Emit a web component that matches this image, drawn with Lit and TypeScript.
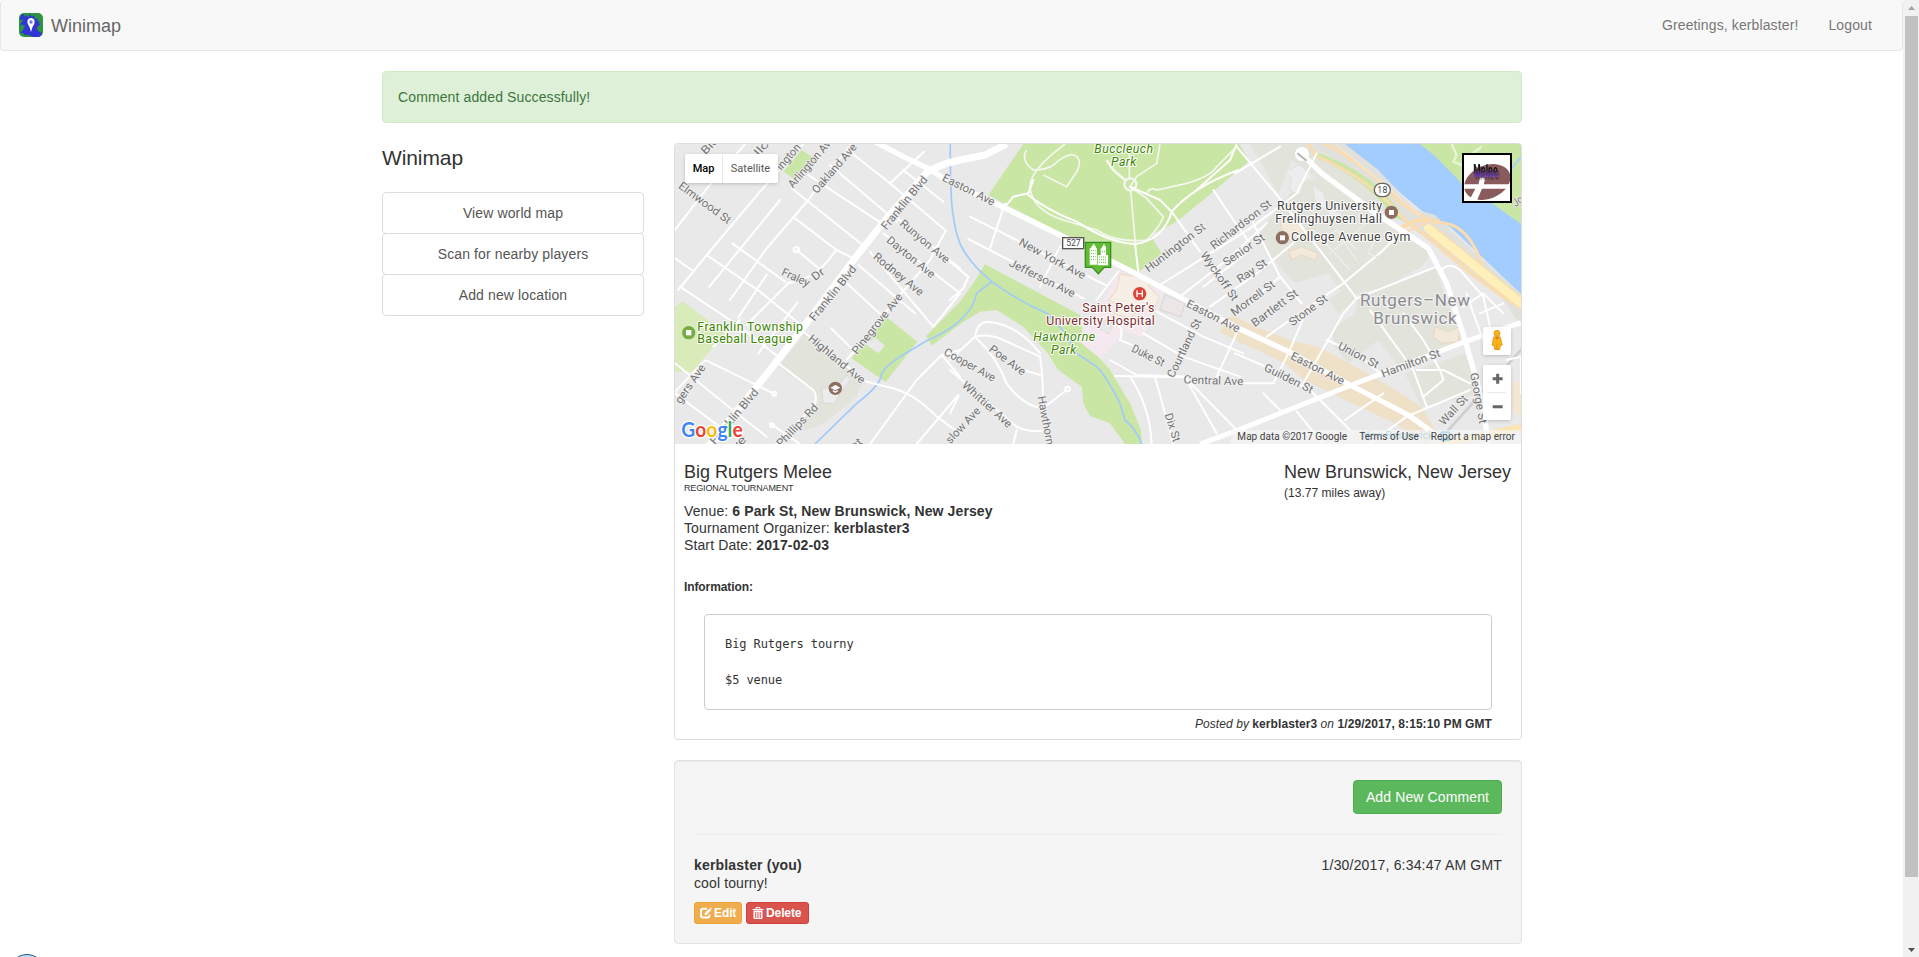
import { LitElement, html, css, svg } from "lit";
import { customElement } from "lit/decorators.js";

type Label = [string, number, number, number, number, number?];

/* Map drawing units are thirds of a pixel. */
const streets: Label[] = [
  ["Elmwood St", 30, 133, 180, 243],
  ["Arlington Ave", 360, 138, 486, -8],
  ["Oakland Ave", 432, 155, 553, 15],
  ["Blo", 98, 37, 140, -6],
  ["llcr", 258, 42, 300, -5],
  ["ington", 325, 85, 385, 15],
  ["Franklin Blvd", 640, 264, 765, 112],
  ["Runyon Ave", 695, 245, 835, 362],
  ["Dayton Ave", 655, 295, 792, 407],
  ["Rodney Ave", 615, 345, 757, 460],
  ["Fraley", 337, 393, 418, 430],
  ["Dr", 428, 414, 459, 390],
  ["Franklin Blvd", 424, 538, 552, 380],
  ["Pinegrove Ave", 552, 638, 690, 463],
  ["Highland Ave", 420, 590, 582, 724],
  ["gers Ave", 22, 787, 98, 676],
  ["Franklin Blvd", 126, 908, 258, 750],
  ["Phillips Rd", 325, 915, 438, 796],
  ["ve", 190, 925, 222, 892],
  ["ct", 545, 922, 572, 900],
  ["slow Ave", 832, 905, 925, 806],
  ["Cooper Ave", 825, 632, 975, 715],
  ["Easton Ave", 820, 110, 973, 187],
  ["New York Ave", 1050, 303, 1245, 408],
  ["Jefferson Ave", 1020, 366, 1214, 462],
  ["Poe Ave", 962, 622, 1064, 698],
  ["Whittier Ave", 882, 730, 1022, 856],
  ["Hawthorn", 1114, 768, 1142, 914],
  ["Duke St", 1388, 622, 1482, 670],
  ["Dix St", 1495, 820, 1522, 904],
  ["Courtland St", 1500, 710, 1584, 538],
  ["Central Ave", 1541, 718, 1720, 724],
  ["Easton Ave", 1552, 488, 1708, 567],
  ["Wyckoff St", 1600, 338, 1698, 478],
  ["Huntington St", 1428, 388, 1602, 256],
  ["Richardson St", 1625, 320, 1800, 186],
  ["Senior St", 1662, 370, 1780, 288],
  ["Ray St", 1703, 420, 1787, 364],
  ["Morrell St", 1686, 520, 1811, 428],
  ["Bartlett St", 1747, 552, 1880, 455],
  ["Stone St", 1860, 550, 1968, 470],
  ["Union St", 2007, 615, 2125, 675],
  ["Hamilton St", 2135, 702, 2309, 637],
  ["Easton Ave", 1865, 645, 2022, 725],
  ["Guilden St", 1785, 680, 1928, 750],
  ["Wall St", 2313, 850, 2386, 770],
  ["George St", 2412, 698, 2440, 850],
  ["Jo", 2530, 192, 2556, 174],
];

const streetLabel = ([t, x1, y1, x2, y2]: Label) => {
  const dx = x2 - x1, dy = y2 - y1;
  const a = (Math.atan2(dy, dx) * 180) / Math.PI;
  return svg`<text class="st" textLength=${Math.hypot(dx, dy).toFixed(1)} lengthAdjust="spacingAndGlyphs"
    transform="translate(${x1} ${y1}) rotate(${a.toFixed(1)}) translate(0 12)">${t}</text>`;
};

@customElement("venue-map")
class VenueMap extends LitElement {
  static styles = css`
    :host { display: block; position: relative; height: 300px; overflow: hidden; font-family: Roboto, Arial, sans-serif; }
    .canvas { display: block; width: 846px; height: 300px; }
    .st { font-size: 34px; fill: #737373; stroke: #f1f1f1; stroke-width: 5px; paint-order: stroke; stroke-linejoin: round; }
    .poi { font-size: 37px; stroke: #fff; stroke-width: 6px; paint-order: stroke; stroke-linejoin: round; }
    .green { fill: #3d8500; }
    .it { font-style: italic; }
    .maroon { fill: #7a2e2e; }
    .dark { fill: #444; }
    .area { font-size: 51px; fill: #8b8b8f; stroke: #f2f2f2; stroke-width: 6px; paint-order: stroke; font-weight: 400; }
    .logo { font-size: 65px; font-family: Lato, sans-serif; font-weight: 700; stroke: #fff; stroke-width: 8px; paint-order: stroke; }
    .minor { fill: none; stroke: #fff; stroke-width: 6px; stroke-linejoin: round; stroke-linecap: round; }
    .fine { fill: none; stroke: #f4f6f0; stroke-width: 5px; }
    .type { position: absolute; left: 10px; top: 10px; height: 29px; display: flex; background: #fff; border-radius: 2px; box-shadow: 0 1px 4px -1px rgba(0,0,0,.3); font-size: 11px; line-height: 29px; color: #565656; }
    .on { width: 37px; text-align: center; color: #000; font-weight: 500; border-right: 1px solid #e8e8e8; }
    .off { width: 55px; text-align: center; }
    .game { position: absolute; left: 787px; top: 9px; width: 50px; height: 50px; }
    .melee { font-family: "Liberation Sans", Arial, sans-serif; font-size: 54px; font-weight: 700; filter: drop-shadow(5px 8px 1px rgba(40,30,60,.6)); }
    .peg { position: absolute; left: 808px; top: 183px; width: 28px; height: 28px; background: #fff; border-radius: 2px; box-shadow: 0 1px 4px -1px rgba(0,0,0,.3); }
    .zoom { position: absolute; left: 808px; top: 221px; width: 28px; height: 55px; background: #fff; border-radius: 2px; box-shadow: 0 1px 4px -1px rgba(0,0,0,.3); }
    .legal { position: absolute; right: 0; bottom: 0; height: 14px; display: flex; font-size: 10px; line-height: 14px; color: #444; white-space: nowrap; letter-spacing: .04px; background: rgba(245,245,245,.7); }
    .legal span { padding: 0 6px; }
  `;
  render() {
    return html`
      <svg class="canvas" viewBox="15 12 2538 900">
        <defs><linearGradient id="ink" x1="0" y1="0" x2="0" y2="1"><stop offset=".4" stop-color="#111" /><stop offset=".75" stop-color="#6a35e8" /></linearGradient></defs>
        <rect x="15" y="12" width="2538" height="900" fill="#e9e9e9" />
        <g fill="#cae6a4">
          <path d="M395,30 440,60 375,118 340,95Z" />
          <path d="M15,500 38,484 165,580 65,695 15,695Z" fill="#d9ebb9" />
          <path d="M648,530 742,605 647,726 545,655Z" />
          <path d="M585,612 615,592 645,617 625,640Z" fill="#e9e9e9" />
          <path d="M1060,12 955,165 1010,195 1175,280 1270,330 1405,397 1475,340 1440,285 1490,262 1523,242 1600,180 1738,62 1708,12Z" />
          <path d="M945,373 1230,525 1240,600 1320,690 1380,790 1413,870 1416,912 1365,912 1320,850 1260,828 1240,790 1235,740 1165,690 1130,635 1060,560 980,510 930,515 880,545 785,617 768,588 870,485 910,430Z" />
        </g>
        <path d="M403,580 580,722 560,770 500,820 440,862 400,870 385,850 445,790 440,760 325,680Z" fill="#e2e4dc" />
        <path d="M455,745 505,735 530,705 543,718 510,760 495,790 460,790Z" fill="#ececec" stroke="#d8d8d8" stroke-width="3" />
        <g transform="translate(1695 0)">
          <g fill="#e2e4dc">
            <path d="M45,12 320,12 420,120 500,230 430,210 240,110 170,60 130,160 90,90Z" />
            <path d="M110,230 190,130 260,110 420,230 590,340 560,380 450,440 330,470 280,400 180,430 90,330 70,290Z" />
            <path d="M370,470 600,380 650,520 690,610 500,690 430,600 340,670 300,620 290,570 360,520Z" />
            <path d="M510,700 690,640 735,760 560,800Z" />
            <path d="M280,480 350,430 370,480 310,520Z" />
          </g>
          <path d="M320,12 420,85 500,162 560,212 650,265 740,350 858,462 858,12Z" fill="#a3ccff" />
          <path d="M555,12 600,48 680,130 740,168 858,252 858,12Z" fill="#cae6a4" />
          <path d="M240,12 330,12 430,90 540,208 600,225 700,320 858,463 858,560 800,470 540,270 480,230 370,110Z" fill="#e0e0dc" />
          <path d="M240,50 Q400,120 480,235 L510,240 Q430,100 240,35Z" fill="#cae6a4" />
          <path d="M0,528 60,560 180,605 250,620 390,695 520,775 560,800 605,880 575,912 480,850 330,780 200,715 150,670 0,600 -45,575 -20,532Z" fill="#efe0c8" />
          <path d="M830,730 843,722 858,728 858,830 830,810Z" fill="#f3e6d3" />
          <g fill="none" stroke-linecap="round">
            <path d="M220,12 240,45 Q410,120 510,240 L600,310 Q720,420 858,505" stroke="#fadcae" stroke-width="9" />
            <path d="M270,12 Q400,80 480,175 Q560,240 630,250 T740,370" stroke="#fadcae" stroke-width="9" />
            <path d="M300,12 480,160 560,230" stroke="#f8e3c4" stroke-width="5" />
            <path d="M500,262 550,240 610,245" stroke="#fadcae" stroke-width="12" />
            <path d="M515,275 590,240" stroke="#fadcae" stroke-width="6" />
            <path d="M580,265 858,490" stroke="#f6ddb0" stroke-width="34" stroke-linecap="butt" />
            <path d="M580,265 858,490" stroke="#ffefb8" stroke-width="26" />
            <path d="M620,912 858,862" stroke="#fbe4ad" stroke-width="20" />
            <path d="M640,870 858,630" stroke="#cfcfcf" stroke-width="8" />
          </g>
          <path d="M150,95 195,75 230,110 205,130 195,165 165,150 170,115Z M232,135 265,160 280,200 325,225 300,240 270,210 240,180Z" fill="#ededed" stroke="#ddd" stroke-width="2" />
          <path d="M135,240 175,230 205,270 240,265 230,305 200,290 165,300 145,285Z M160,335 200,320 250,340 240,362 200,345 170,360Z M600,560 640,575 675,560 670,605 620,610 595,590Z" fill="#f2e9da" stroke="#e6d8c0" stroke-width="3" />
          <path d="M650,12 665,45 655,65 690,80 M740,20 700,50" fill="none" stroke="#e8f5d4" stroke-width="7" />
          <path d="M858,50 815,105" stroke="#a3ccff" stroke-width="5" />
        </g>
        <path d="M1350,395 1480,455 1420,592 1362,572 1293,658 1225,602 1270,530Z" fill="#f5e9ef" />
        <path d="M1350,402 1430,415 1438,440 1468,470 1450,515 1410,500 1380,535 1330,520 1345,495 1315,480 1340,450Z" fill="#f7efe5" stroke="#eedecb" stroke-width="4" />
        <path d="M1485,465 1545,490 1532,530 1470,510Z" fill="#ece6e6" stroke="#dedada" stroke-width="4" />
        <path d="M1300,540 1330,550 1318,582 1285,565Z" fill="#e8e8e8" stroke="#ddd" stroke-width="3" />

        <g fill="none" stroke="#a1c9fb" stroke-width="5">
          <path d="M841,12 Q840,90 845,190 Q855,290 880,330 Q910,380 965,425 Q1040,480 1130,520 Q1180,560 1220,640 L1280,680 Q1310,710 1350,790 L1365,840 Q1400,870 1415,912" />
          <path d="M965,425 920,460 Q910,500 890,520 Q850,570 770,602 L690,650 Q630,690 633,712 Q620,745 560,790 L435,912" />
        </g>

        <g class="fine">
          <path d="M1185,12 Q1080,90 1080,140 Q1085,210 1180,240 L1280,270 Q1340,310 1430,300 Q1470,260 1480,230 L1430,175 1380,140 1400,110 1460,70 1470,12" />
          <path d="M1070,30 Q1050,60 1090,90 Q1130,90 1150,75 Q1200,30 1220,50 Q1240,70 1210,110 L1190,140 1120,105" />
          <path d="M1378,120 1378,20 M1382,150 1396,310 M1430,160 Q1440,140 1460,150 L1550,130 Q1620,110 1640,80 L1700,20" />
          <circle cx="1381" cy="133" r="18" stroke-width="7" />
          <path d="M1310,60 1330,90 1365,120" stroke-width="8" />
        </g>
        <g class="minor">
          <path d="M15,270 115,140 225,12 M25,450 110,345 270,155 400,12 M118,440 330,180 M180,480 290,325 415,180 490,80 545,12 M205,532 290,404 M230,555 360,425 M265,640 382,488 M350,430 Q440,420 498,330" />
          <path d="M15,355 65,390 M30,440 210,560 318,645 M110,345 270,455 405,565 M187,310 345,425 M380,330 455,392 M375,235 500,330 560,360 M365,145 590,325 M415,105 650,260 M480,75 680,245 M540,35 660,130 825,270 M660,130 762,35 M820,185 700,90" />
          <path d="M670,225 870,385 M640,280 870,460 M600,335 790,560 M565,375 735,520 M530,430 640,530 M483,565 560,640 M827,272 780,360 690,465 530,660 M870,460 790,560" />
          <path d="M400,575 590,725 650,740 Q730,755 800,830 L870,880 M325,670 430,750 Q445,770 430,800 L310,920 M15,670 200,820 290,890 M15,760 175,880 M110,662 310,760 M15,755 105,662 M300,850 390,912 M870,630 815,645 740,720 600,912 M865,765 740,912 M815,645 870,710 M130,620 210,540" />
          <circle cx="379" cy="329" r="8" /><circle cx="313" cy="761" r="6" /><circle cx="306" cy="856" r="6" />
          <path d="M840,365 895,410 880,445 840,480 M900,230 1310,437 M895,297 1240,475 M1005,190 960,325 M1170,320 1110,440 M1345,395 1280,480 M1010,195 1030,170 1075,160 1090,120" />
          <path d="M1075,165 Q1130,210 1220,245 Q1320,310 1395,312 Q1480,300 1505,215 Q1570,140 1705,90 M1405,397 1395,312 M1380,140 1470,180 1505,215 1590,335" />
          <path d="M1700,12 1680,60 1580,150 M840,660 915,590 Q960,580 1000,600 L1110,650 Q1120,720 1118,770 M915,590 Q920,550 950,545 Q1040,550 1110,640 M915,590 Q980,650 1010,730 Q1060,800 1120,805 L1190,750 M1060,690 1118,707 M840,690 1040,860 Q1080,880 1130,870 M1040,870 1030,912 M840,820 865,770" />
          <circle cx="1193" cy="747" r="7" />
          <path d="M1470,435 1745,262 1880,160 1940,40 M1530,470 1670,360 1790,250 M1460,515 1600,590 1720,640 M1330,550 Q1365,560 1350,600 L1410,625 M1420,580 1540,650 1710,710 M1320,660 1400,705 1560,710 M1335,708 1545,712 M1380,710 Q1440,800 1445,912 M1455,710 1510,912 M1545,712 1640,880 M1545,712 1700,870 M1640,710 1700,580" />
          <path d="M1600,440 1740,330 M1620,500 1760,400 1870,310 M1630,150 1690,240 1740,310 M1700,20 1825,170 1980,370 2060,475 M1695,100 1830,20 M1740,230 1830,410 1895,490 M1830,410 1700,520" />
          <path d="M1790,590 1860,540 2020,430 2140,330 2190,280 M1915,500 1855,640 1810,730 M1900,730 1980,590 2020,520 2060,475 2300,380 M2100,510 2230,690 2270,800 M1970,600 2060,640 2130,700 M1695,640 1810,690 1920,750 2040,870 M1695,730 1810,730 M1880,815 1960,912 M2025,840 2140,760 M2100,910 2210,830 2400,750 M1780,760 1840,820" />
          <path d="M2200,520 2260,600 2310,690 M2310,400 Q2330,360 2370,390 L2440,470 2460,560 M2380,500 2440,460 2500,520 M2430,520 2500,490 M2240,690 2320,690 2400,730 M2260,770 2320,720 2310,690 M2510,660 2553,650 2553,760 M2390,460 2410,520 2440,600" />
          <path d="M1960,300 2000,270 2060,330 M1980,340 2090,250 M2010,290 2060,360 M2110,310 2095,340 2120,350 M1930,270 2040,390" stroke="#ededeb" stroke-width="4" />
        </g>
        <g fill="none" stroke="#fff" stroke-linejoin="round">
          <path d="M90,950 300,690 390,575 560,348 650,235 770,98 Q810,72 870,60 L945,45 1010,12" stroke-width="21" />
          <path d="M615,5 700,50 780,88 820,115 975,190 1170,285 1390,397 1545,480 1710,567 1855,635 2040,735 2215,825 2320,900" stroke-width="16" />
          <path d="M1590,912 1700,872 2045,735 2385,605 2553,548" stroke-width="15" />
          <path d="M1895,42 1955,100 2125,225 2275,325 2330,430 2385,600 2425,740 2442,820 2455,912" stroke-width="16" />
          <circle cx="1896" cy="42" r="14" fill="#fff" stroke-width="14" />
          <path d="M1882,40 1910,62" stroke="#b5b5b5" stroke-width="6" />
        </g>
        ${streets.map(streetLabel)}

        <circle cx="56" cy="578" r="20" fill="#76ad45" /><rect x="48" y="570" width="16" height="16" fill="#fff" />
        <text class="poi green" x="82" y="572" textLength="317">Franklin Township</text>
        <text class="poi green" x="82" y="610" textLength="285">Baseball League</text>
        <circle cx="496" cy="745" r="20" fill="#8d6e63" /><path d="M481,743 496,735 511,743 496,751Z M488,750 496,754 504,750 504,754 496,759 488,754Z" fill="#fff" />
        <text class="poi green it" x="1273" y="38" textLength="176">Buccleuch</text>
        <text class="poi green it" x="1323" y="77" textLength="76">Park</text>
        <text class="poi green it" x="1090" y="604" textLength="185">Hawthorne</text>
        <text class="poi green it" x="1143" y="643" textLength="76">Park</text>
        <text class="poi maroon" x="1237" y="517" textLength="216">Saint Peter's</text>
        <text class="poi maroon" x="1129" y="556" textLength="325">University Hospital</text>
        <circle cx="1409" cy="461" r="20" fill="#db4437" /><path d="M1401,451V471M1417,451V471M1401,461H1417" stroke="#fff" stroke-width="4" />
        <text class="poi dark" x="1821" y="211" textLength="315">Rutgers University</text>
        <text class="poi dark" x="1816" y="250" textLength="320">Frelinghuysen Hall</text>
        <text class="poi dark" x="1863" y="304" textLength="358">College Avenue Gym</text>
        <circle cx="2164" cy="217" r="20" fill="#8d6e63" /><rect x="2157" y="210" width="15" height="15" fill="#fff" />
        <circle cx="1837" cy="293" r="20" fill="#8d6e63" /><rect x="1830" y="286" width="15" height="15" fill="#fff" />
        <text class="area" x="2070" y="499" textLength="330">Rutgers–New</text>
        <text class="area" x="2110" y="552" textLength="250">Brunswick</text>
        <rect x="1178" y="293" width="63" height="33" fill="#fff" stroke="#555" stroke-width="4" />
        <text x="1189" y="319" font-size="26" fill="#444" textLength="43">527</text>
        <rect x="2113" y="130" width="48" height="40" rx="20" fill="#fff" stroke="#666" stroke-width="4" />
        <text x="2122" y="159" font-size="26" fill="#444" textLength="30">18</text>
        <text x="2075" y="898" font-size="32" fill="#2fa3d8" textLength="215">New Brunswick</text>
        <rect x="2311" y="874" width="31" height="30" rx="5" fill="#2fa3d8" /><rect x="2318" y="880" width="17" height="12" fill="#fff" />

        <g transform="translate(840 0)">
          <path d="M406,307H482V382H463L445,401 427,382H406Z" fill="#62bb35" stroke="#359021" stroke-width="4" />
          <path d="M419,374V325H424V319H428V313H434V319H438V325H441V374Z M443,376V345H452V325H456V319H460V313H464V319H468V345H474V376Z" fill="#fff" />
          <path d="M423,332H437M423,341H437M423,350H437M423,359H437M447,351H471M447,359H471M447,367H471M456,334H466" stroke="#62bb35" stroke-width="3" stroke-dasharray="3 3" />
        </g>
        <text class="logo" x="34" y="891" textLength="184" lengthAdjust="spacingAndGlyphs"><tspan fill="#4285f4">G</tspan><tspan fill="#ea4335">o</tspan><tspan fill="#fbbc05">o</tspan><tspan fill="#4285f4">g</tspan><tspan fill="#34a853">l</tspan><tspan fill="#ea4335">e</tspan></text>
      </svg>
      <div class="type"><span class="on">Map</span><span class="off">Satellite</span></div>
      <svg class="game" viewBox="0 0 150 150">
        <rect x="3" y="3" width="144" height="144" fill="#fff" />
        <ellipse cx="76" cy="87" rx="72" ry="50" transform="rotate(-22 76 87)" fill="#895b5c" />
        <path d="M6,94H144V107H60L45,142H22L40,107H6Z M48,100 54,74 70,74 64,100Z" fill="#fff" />
        <text class="melee" x="34" y="73" fill="url(#ink)" textLength="74" lengthAdjust="spacingAndGlyphs">Melee</text>
        <rect x="3" y="3" width="144" height="144" fill="none" stroke="#000" stroke-width="6" />
      </svg>
      <svg class="peg" viewBox="0 0 84 84">
        <path d="M32,30Q42,25 52,30L58,54 52,56 50,68H35L33,56 27,54Z" fill="#fbb216" stroke="#ce8a0c" stroke-width="2" />
        <path d="M37,31 42,39 48,31" fill="#e8701a" /><circle cx="42" cy="19" r="9" fill="#fbb216" stroke="#ce8a0c" stroke-width="2" /><path d="M42,50V67" stroke="#ce8a0c" stroke-width="2" />
      </svg>
      <svg class="zoom" viewBox="0 0 84 165">
        <path d="M29,41H59M44,26V56M29,125H59" stroke="#666" stroke-width="9" /><path d="M13,83H69" stroke="#e6e6e6" stroke-width="3" />
      </svg>
      <div class="legal"><span>Map data ©2017 Google</span><span>Terms of Use</span><span>Report a map error</span></div>
    `;
  }
}

@customElement("app-root")
class AppRoot extends LitElement {
  static styles = css`
    :host { display: flex; position: relative; width: 1919px; height: 957px; overflow: hidden; background: #fff; color: #333; font: 14px/20px "Liberation Sans", Arial, sans-serif; letter-spacing: .12px; }
    * { box-sizing: border-box; }
    venue-map { letter-spacing: 0; }
    .page { width: 1903px; flex: none; }
    .bar { height: 51px; display: flex; align-items: center; background: #f8f8f8; border: 1px solid #e7e7e7; border-top-width: 0; border-radius: 4px; padding: 0 30px 0 18px; color: #777; }
    .mark { width: 24px; height: 24px; margin-right: 8px; }
    .brand { font-size: 18px; color: #666; flex: 1; letter-spacing: 0; padding-top: 1px; }
    .hi { margin-right: 30px; }
    .wrap { width: 1140px; margin: 20px 0 0 382px; }
    .alert { background: #dff0d8; border: 1px solid #d6e9c6; border-radius: 4px; color: #3c763d; padding: 15px; margin-bottom: 20px; }
    .cols { display: grid; grid-template-columns: 262px 848px; gap: 30px; align-items: start; }
    .head { font-size: 21px; line-height: 30px; margin-bottom: 19px; letter-spacing: -.1px; }
    .item { height: 42px; margin-bottom: -1px; border: 1px solid #ddd; border-radius: 4px; text-align: center; line-height: 40px; color: #555; }
    .card { border: 1px solid #ddd; border-radius: 4px; height: 597px; margin-bottom: 20px; overflow: hidden; }
    .body { padding: 18px 9px 0; }
    .top { display: flex; justify-content: space-between; height: 32px; padding-right: 1px; }
    .title { font-size: 18px; line-height: 20px; letter-spacing: 0; }
    .kind { font-size: 9px; line-height: 12px; letter-spacing: -.13px; }
    .miles { font-size: 12px; line-height: 20px; margin-top: 1px; letter-spacing: .04px; }
    .facts { margin-top: 9px; line-height: 17px; }
    .info { margin-top: 25px; font-size: 12px; line-height: 17px; font-weight: 700; letter-spacing: -.1px; }
    .pre { margin: 18px 20px 0; padding: 20px; height: 96px; border: 1px solid #ccc; border-radius: 4px; font: 12px/18px "DejaVu Sans Mono", monospace; letter-spacing: -.08px; white-space: pre; }
    .posted { margin: 6px 20px 0; text-align: right; font-size: 12px; line-height: 17px; letter-spacing: .07px; }
    .well { height: 184px; background: #f5f5f5; border: 1px solid #e3e3e3; border-radius: 4px; box-shadow: inset 0 1px 1px rgba(0,0,0,.05); padding: 19px; }
    .act { display: flex; justify-content: flex-end; padding-bottom: 20px; border-bottom: 1px solid #eee; }
    .add { width: 149px; height: 34px; line-height: 32px; text-align: center; color: #fff; background: #5cb85c; border: 1px solid #4cae4c; border-radius: 4px; }
    .row { display: flex; justify-content: space-between; margin-top: 20px; line-height: 20px; letter-spacing: .18px; }
    .said { line-height: 17px; }
    .btns { display: flex; gap: 4px; margin-top: 10px; }
    .btn { height: 22px; display: flex; align-items: center; gap: 2px; padding: 0 4px 0 5px; color: #fff; font-size: 12px; font-weight: 700; border-radius: 3px; letter-spacing: -.1px; white-space: nowrap; }
    .edit { width: 48px; background: #f0ad4e; border: 1px solid #eea236; }
    .del { width: 63px; background: #d9534f; border: 1px solid #d43f3a; }
    .ico { width: 12px; height: 12px; flex: none; }
    .scroll { width: 16px; height: 957px; background: #f1f1f1; display: flex; flex-direction: column; }
    .arr { width: 16px; height: 16px; }
    .thumb { height: 861px; margin: 0 1px 0 2px; background: #c1c1c1; }
    .gap { flex: 1; }
    .bubble { position: absolute; left: 9px; top: 954px; width: 36px; height: 36px; border-radius: 50%; border: 1px solid #1d5a90; background: #c3dbea; }
  `;
  render() {
    return html`
      <div class="page">
        <nav class="bar">
          <svg class="mark" viewBox="0 0 24 24">
            <rect width="24" height="24" rx="5" fill="#2f9440" />
            <path d="M2,2 5,1 6,4 8,2 9,5 11,1 13,4 15,2 16,6 19,5 18,8 21,8 19,10 22,11 19,13 18,15 19,18 23,20Q22,24 19,24H14L10,22 6,22 4,20 1,20 4,17 5,13 3,11 1,13V5Z" fill="#3135d6" />
            <path d="M1,7 4,6 3,9 1,11Z M3,14 6,12 5,16Z" fill="#2f9440" />
            <path d="M12,19Q11,14 8.6,10.5Q7.5,5.3 12,5Q16.500,5.300 15.400,10.500Q13,14 12,19Z" fill="#fff" /><circle cx="12" cy="9" r="1.700" fill="#6b7be0" />
          </svg>
          <span class="brand">Winimap</span><span class="hi">Greetings, kerblaster!</span><span>Logout</span>
        </nav>
        <main class="wrap">
          <div class="alert">Comment added Successfully!</div>
          <div class="cols">
            <aside>
              <div class="head">Winimap</div>
              ${["View world map", "Scan for nearby players", "Add new location"].map((t) => html`<div class="item">${t}</div>`)}
            </aside>
            <section>
              <div class="card">
                <venue-map></venue-map>
                <div class="body">
                  <div class="top">
                    <div><div class="title">Big Rutgers Melee</div><div class="kind">REGIONAL TOURNAMENT</div></div>
                    <div><div class="title">New Brunswick, New Jersey</div><div class="miles">(13.77 miles away)</div></div>
                  </div>
                  <div class="facts">
                    <div>Venue: <b>6 Park St, New Brunswick, New Jersey</b></div>
                    <div>Tournament Organizer: <b>kerblaster3</b></div>
                    <div>Start Date: <b>2017-02-03</b></div>
                  </div>
                  <div class="info">Information:</div>
                  <div class="pre">${"Big Rutgers tourny\n\n$5 venue"}</div>
                  <div class="posted"><i>Posted by</i> <b>kerblaster3</b> <i>on</i> <b>1/29/2017, 8:15:10 PM GMT</b></div>
                </div>
              </div>
              <div class="well">
                <div class="act"><div class="add">Add New Comment</div></div>
                <div class="row"><b>kerblaster (you)</b><span>1/30/2017, 6:34:47 AM GMT</span></div>
                <div class="said">cool tourny!</div>
                <div class="btns">
                  <div class="btn edit">
                    <svg class="ico" viewBox="0 0 12 12"><path d="M7,1.700H3Q1,1.700 1,3.700V8.500Q1,10.500 3,10.500H7.500Q9.500,10.500 9.500,8.500V7.500" fill="none" stroke="#fff" stroke-width="1.900" /><path d="M4.500,8.200 5,5.700 9.300,1.400 11.200,3.300 7,7.600Z M9.800,.9 10.600,.2 12,1.700 11.500,2.600Z" fill="#fff" /></svg>
                    Edit
                  </div>
                  <div class="btn del">
                    <svg class="ico" viewBox="0 0 12 12"><path d="M.5,2.500H11.500M4,2V.6H8V2" fill="none" stroke="#fff" /><path d="M1.500,3.500H10.500V11Q10.500,12 9.500,12H2.500Q1.500,12 1.500,11Z" fill="#fff" /><path d="M3.500,5V11M5.200,5V11M6.900,5V11M8.600,5V11" stroke="#d9534f" stroke-width=".8" /></svg>
                    Delete
                  </div>
                </div>
              </div>
            </section>
          </div>
        </main>
      </div>
      <div class="scroll">
        <svg class="arr" viewBox="0 0 16 16"><path d="M5,10 8.500,6 12,10Z" fill="#a3a3a3" /></svg>
        <div class="thumb"></div><div class="gap"></div>
        <svg class="arr" viewBox="0 0 16 16"><path d="M5,7 8.500,11 12,7Z" fill="#505050" /></svg>
      </div>
      <div class="bubble"></div>
    `;
  }
}
